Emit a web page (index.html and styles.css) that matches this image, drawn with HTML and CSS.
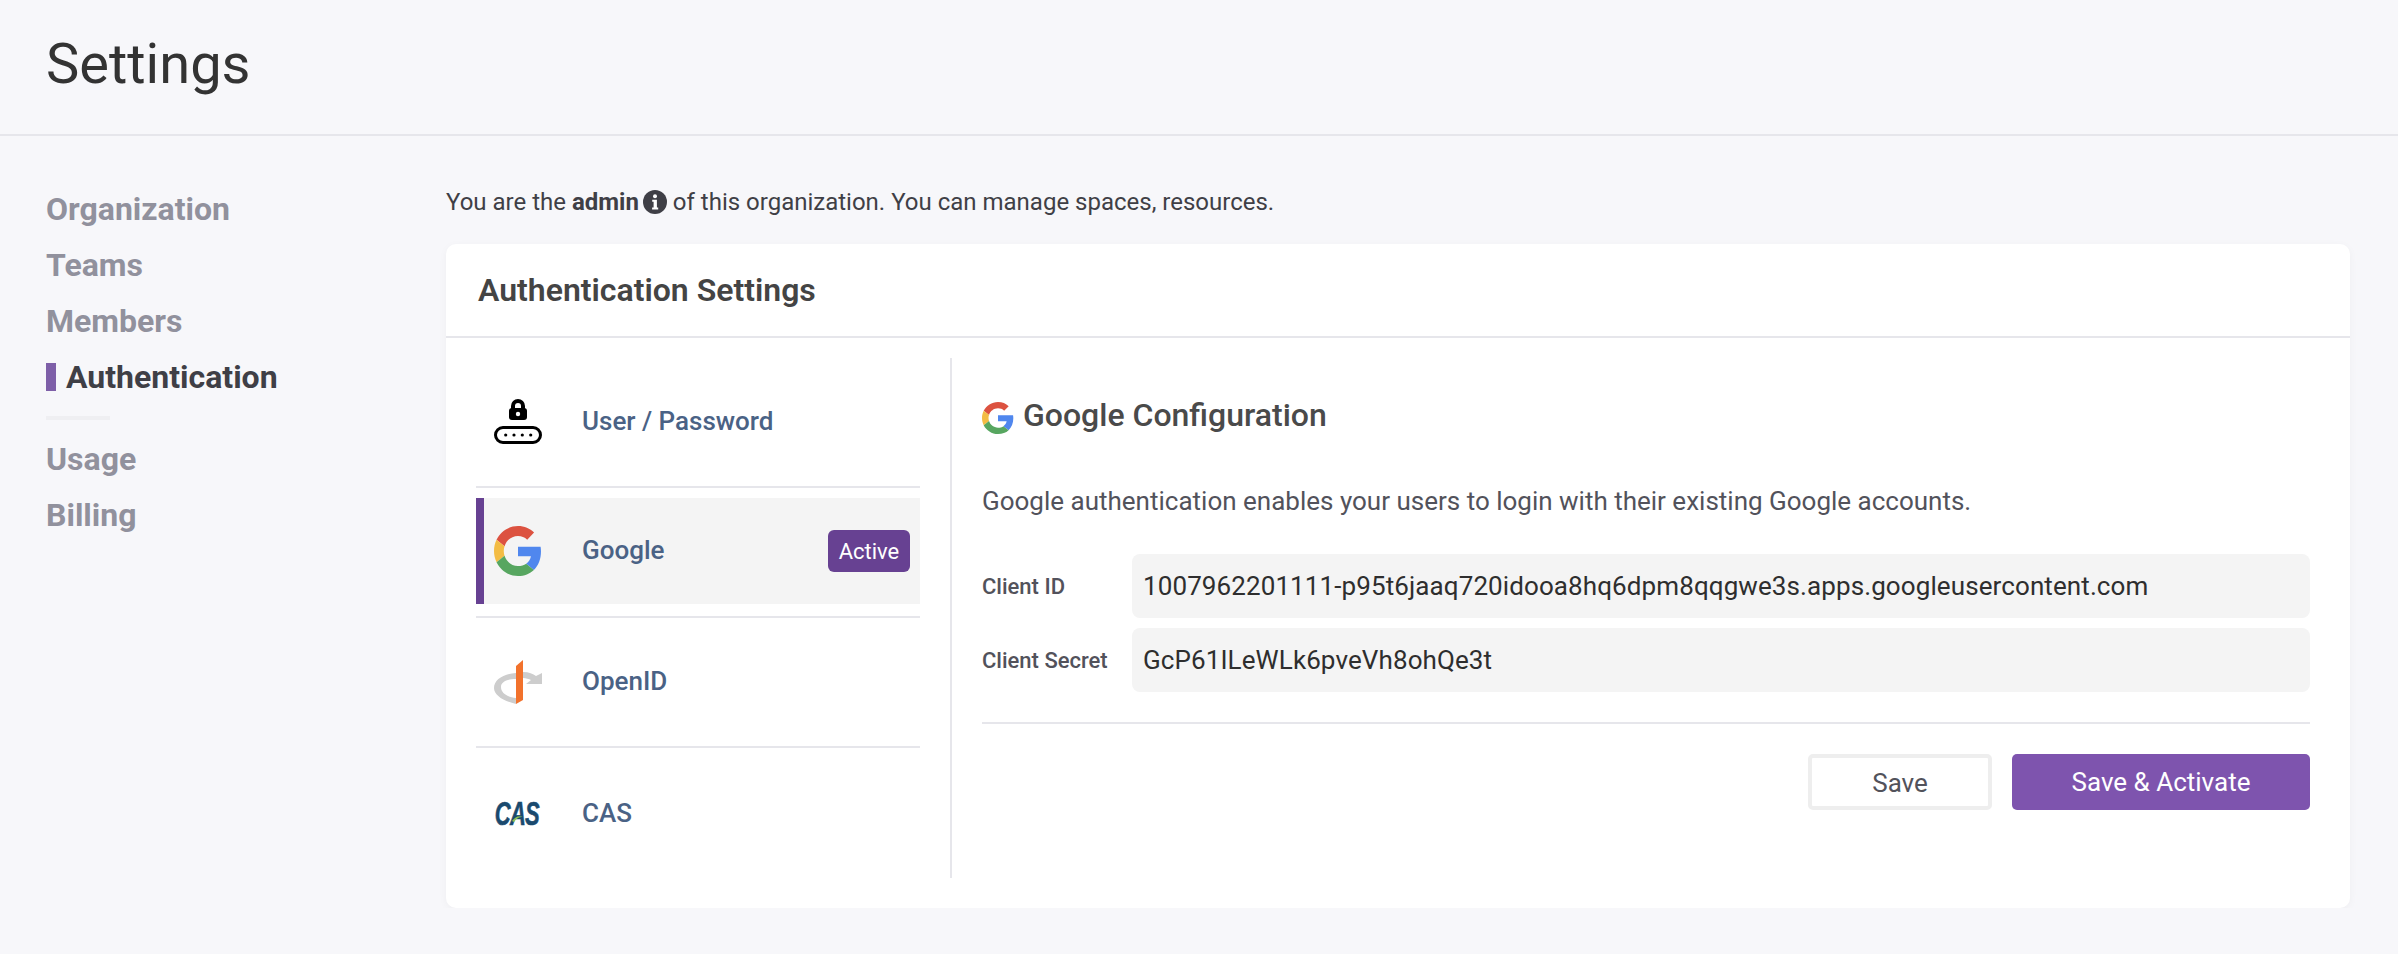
FILE: index.html
```html
<!DOCTYPE html>
<html lang="en">
<head>
    <meta charset="UTF-8">
    <meta name="viewport" content="width=device-width, initial-scale=1.0">
    <title>Settings</title>
    <link rel="stylesheet" href="styles.css">
</head>
<body>
    <header class="pageHeader">
        <h1>Settings</h1>
    </header>

    <div class="pageBody">
        <nav class="sideNav">
            <ul>
                <li><a href="#">Organization</a></li>
                <li><a href="#">Teams</a></li>
                <li><a href="#">Members</a></li>
                <li class="current"><a href="#">Authentication</a></li>
            </ul>
            <hr class="navRule">
            <ul>
                <li><a href="#">Usage</a></li>
                <li><a href="#">Billing</a></li>
            </ul>
        </nav>

        <main class="content">
            <p class="roleNote">You are the <strong>admin</strong><svg class="infoIcon" viewBox="0 0 24 24" width="24" height="24">
                    <circle cx="12" cy="12" r="12" fill="#3f3f46"/>
                    <circle cx="12" cy="6.2" r="2" fill="#fff"/>
                    <path d="M9.2 9.8h4.7v7.6h1.3v2H9.1v-2h1.5v-5.6H9.2z" fill="#fff"/>
                </svg> of this organization. You can manage spaces, resources.</p>

            <section class="card">
                <h2 class="cardTitle">Authentication Settings</h2>
                <div class="cardBody">
                    <ul class="providers">
                        <li class="provider">
                            <div class="providerInner">
                                <svg class="providerIcon" viewBox="0 0 48 48" width="48" height="48">
                                    <path d="M17 12V7a7 7 0 0 1 14 0v5h-4V7a3 3 0 0 0-6 0v5z" fill="#000" transform="translate(0 1)"/>
                                    <rect x="15" y="10" width="18" height="12" rx="3" fill="#000"/>
                                    <circle cx="24" cy="16" r="2.2" fill="#fff"/>
                                    <rect x="1.5" y="29.5" width="45" height="15" rx="7.5" fill="none" stroke="#000" stroke-width="3"/>
                                    <circle cx="11.7" cy="37" r="1.6"/>
                                    <circle cx="20" cy="37" r="1.6"/>
                                    <circle cx="28.3" cy="37" r="1.6"/>
                                    <circle cx="36.7" cy="37" r="1.6"/>
                                </svg>
                                <span class="providerName">User / Password</span>
                            </div>
                        </li>
                        <li class="provider active">
                            <div class="providerInner">
                                <svg class="providerIcon" viewBox="0 0 48 48" width="48" height="50" preserveAspectRatio="none">
                                    <path fill="#dc5240" d="M24 9.5c3.54 0 6.71 1.22 9.21 3.6l6.85-6.85C35.9 2.38 30.47 0 24 0 14.62 0 6.51 5.38 2.56 13.22l7.98 6.19C12.43 13.72 17.74 9.5 24 9.5z"/>
                                    <path fill="#5087ee" d="M46.98 24.55c0-1.57-.15-3.09-.38-4.55H24v9.02h12.94c-.58 2.96-2.26 5.48-4.78 7.18l7.73 6c4.51-4.18 7.09-10.36 7.09-17.65z"/>
                                    <path fill="#f3bc44" d="M10.53 28.59c-.48-1.45-.76-2.99-.76-4.59s.27-3.14.76-4.59l-7.98-6.19C.92 16.46 0 20.12 0 24c0 3.88.92 7.54 2.56 10.78l7.97-6.19z"/>
                                    <path fill="#57a660" d="M24 48c6.48 0 11.93-2.13 15.89-5.81l-7.73-6c-2.15 1.45-4.92 2.3-8.16 2.3-6.26 0-11.57-4.22-13.47-9.91l-7.98 6.19C6.51 42.62 14.62 48 24 48z"/>
                                </svg>
                                <span class="providerName">Google</span>
                                <span class="badge">Active</span>
                            </div>
                        </li>
                        <li class="provider">
                            <div class="providerInner">
                                <svg class="providerIcon" viewBox="0 0 48 44" width="48" height="44">
                                    <path d="M22 13C9 14 0 20 0 28c0 7 9 13 22 16v-6c-9-1-15-5-15-11 0-5 6-8 15-8z" fill="#cdcdcd"/>
                                    <path d="M29 12c6 0 10 2 13 4l6-3v11H32l5-4c-2-1-5-2-8-2z" fill="#cdcdcd"/>
                                    <path d="M22 6l7-6v40l-7 4z" fill="#f2722c"/>
                                </svg>
                                <span class="providerName">OpenID</span>
                            </div>
                        </li>
                        <li class="provider">
                            <div class="providerInner">
                                <svg class="providerIcon casLogo" viewBox="0 0 72 40" width="48" height="40" preserveAspectRatio="none">
                                    <text class="casMark" x="1" y="32">CAS</text>
                                    <path d="M27 28c5-4 10-6 16-4-5 0-9 1-13 5z" fill="#8cc152"/>
                                </svg>
                                <span class="providerName">CAS</span>
                            </div>
                        </li>
                    </ul>

                    <div class="config">
                        <h3 class="configTitle">
                            <svg viewBox="0 0 48 48" width="32" height="32">
                                <path fill="#dc5240" d="M24 9.5c3.54 0 6.71 1.22 9.21 3.6l6.85-6.85C35.9 2.38 30.47 0 24 0 14.62 0 6.51 5.38 2.56 13.22l7.98 6.19C12.43 13.72 17.74 9.5 24 9.5z"/>
                                <path fill="#5087ee" d="M46.98 24.55c0-1.57-.15-3.09-.38-4.55H24v9.02h12.94c-.58 2.96-2.26 5.48-4.78 7.18l7.73 6c4.51-4.18 7.09-10.36 7.09-17.65z"/>
                                <path fill="#f3bc44" d="M10.53 28.59c-.48-1.45-.76-2.99-.76-4.59s.27-3.14.76-4.59l-7.98-6.19C.92 16.46 0 20.12 0 24c0 3.88.92 7.54 2.56 10.78l7.97-6.19z"/>
                                <path fill="#57a660" d="M24 48c6.48 0 11.93-2.13 15.89-5.81l-7.73-6c-2.15 1.45-4.92 2.3-8.16 2.3-6.26 0-11.57-4.22-13.47-9.91l-7.98 6.19C6.51 42.62 14.62 48 24 48z"/>
                            </svg>
                            <span class="configName">Google Configuration</span>
                        </h3>
                        <p class="configText">Google authentication enables your users to login with their existing Google accounts.</p>
                        <div class="field">
                            <label>Client ID</label>
                            <div class="fieldValue">1007962201111-p95t6jaaq720idooa8hq6dpm8qqgwe3s.apps.googleusercontent.com</div>
                        </div>
                        <div class="field">
                            <label>Client Secret</label>
                            <div class="fieldValue">GcP61ILeWLk6pveVh8ohQe3t</div>
                        </div>
                        <div class="actions">
                            <button class="btn btnPlain">Save</button>
                            <button class="btn btnPrimary">Save &amp; Activate</button>
                        </div>
                    </div>
                </div>
            </section>
        </main>
    </div>
</body>
</html>
```

FILE: styles.css
```css
/* Page */
body {
    margin: 0;
    font-family: Roboto, Arial, sans-serif;
    background-color: #f7f7fa;
    color: #3f3f46;
}

h1, h2, h3, p, ul {
    margin: 0;
    padding: 0;
}

ul {
    list-style-type: none;
}

.pageHeader {
    height: 134px;
    padding-left: 46px;
    display: flex;
    align-items: center;
    border-bottom: 2px solid #e6e6eb;
}

.pageHeader h1 {
    padding-bottom: 6px;
    font-size: 56px;
    font-weight: 400;
    color: #333;
}

.pageBody {
    display: flex;
}

/* Side navigation */
.sideNav {
    width: 400px;
    padding: 45px 0 0 46px;
}

.sideNav li {
    height: 56px;
    display: flex;
    align-items: center;
}

.sideNav a {
    font-size: 32px;
    font-weight: 700;
    color: #91919d;
    text-decoration: none;
}

.sideNav .current a {
    color: #3f3f46;
}

.sideNav .current::before {
    content: "";
    width: 10px;
    height: 28px;
    margin-right: 10px;
    background-color: #7e5fa8;
}

.navRule {
    width: 64px;
    height: 4px;
    margin: 11px 0;
    border: none;
    background-color: #efeff2;
}

/* Main content */
.content {
    flex: 1;
    padding: 48px 48px 0 0;
}

.roleNote {
    height: 36px;
    font-size: 24px;
    line-height: 36px;
    margin-bottom: 24px;
}

.roleNote strong {
    font-weight: 700;
}

.infoIcon {
    margin-left: 4px;
    vertical-align: -4px;
}

.card {
    background-color: #fff;
    border-radius: 10px;
    box-shadow: 0 2px 8px rgba(0, 0, 0, 0.04);
}

.cardTitle {
    height: 92px;
    padding-left: 32px;
    display: flex;
    align-items: center;
    font-size: 32px;
    font-weight: 600;
    color: #444;
    border-bottom: 2px solid #e6e6eb;
}

.cardBody {
    display: flex;
    padding: 20px 0 30px 30px;
}

/* Provider list */
.providers {
    width: 444px;
    margin-right: 30px;
}

.provider {
    height: 130px;
    box-sizing: border-box;
    display: flex;
    border-bottom: 2px solid #e6e6eb;
}

.provider:last-child {
    border-bottom: none;
}

.providerInner {
    flex: 1;
    display: flex;
    align-items: center;
    padding: 0 10px 0 18px;
}

.provider.active {
    padding: 10px 0 12px;
}

.provider.active .providerInner {
    background-color: #f4f4f4;
    border-left: 8px solid #674192;
    padding-left: 10px;
}

.providerIcon {
    flex: none;
    margin-right: 40px;
}

.casLogo {
    overflow: visible;
}

.providerName {
    padding-bottom: 2px;
    font-size: 26px;
    font-weight: 500;
    color: #4a6285;
    flex: 1;
}

.provider:last-child .providerName {
    padding-bottom: 0;
}

.badge {
    width: 82px;
    height: 42px;
    display: flex;
    align-items: center;
    justify-content: center;
    font-size: 22px;
    color: #fff;
    background-color: #674192;
    border-radius: 6px;
}

.casMark {
    font-family: "Liberation Sans", Arial, sans-serif;
    font-size: 33px;
    font-weight: 700;
    font-style: italic;
    letter-spacing: -1px;
    fill: #1a4a6e;
    stroke: #1a4a6e;
    stroke-width: 0.6px;
}

/* Config panel */
.config {
    flex: 1;
    border-left: 2px solid #e6e6eb;
    padding: 44px 40px 0 30px;
}

.configTitle {
    display: flex;
    align-items: center;
    gap: 9px;
    height: 32px;
    font-size: 32px;
    font-weight: 500;
    color: #4a4a4a;
}

.configName {
    padding-bottom: 6px;
}

.configText {
    margin-top: 49px;
    font-size: 26px;
    line-height: 36px;
    color: #52525b;
}

.field {
    display: flex;
    align-items: center;
    margin-top: 10px;
}

.configText + .field {
    margin-top: 35px;
}

.field label {
    width: 150px;
    flex: none;
    font-size: 22px;
    font-weight: 500;
    color: #52525b;
}

.fieldValue {
    flex: 1;
    height: 64px;
    padding-left: 11px;
    display: flex;
    align-items: center;
    font-size: 26px;
    letter-spacing: 0.1px;
    color: #2e2e2e;
    background-color: #f4f4f4;
    border-radius: 8px;
}

.actions {
    margin-top: 30px;
    padding-top: 30px;
    border-top: 2px solid #e6e6eb;
    display: flex;
    justify-content: flex-end;
    gap: 20px;
}

.btn {
    height: 56px;
    box-sizing: border-box;
    font-family: Roboto, Arial, sans-serif;
    font-size: 26px;
    border-radius: 5px;
    cursor: pointer;
}

.btnPlain {
    width: 184px;
    padding-top: 3px;
    background-color: #fff;
    border: 4px solid #eee;
    color: #52525b;
}

.btnPrimary {
    width: 298px;
    background-color: #7e54ae;
    border: none;
    color: #fff;
}
```
